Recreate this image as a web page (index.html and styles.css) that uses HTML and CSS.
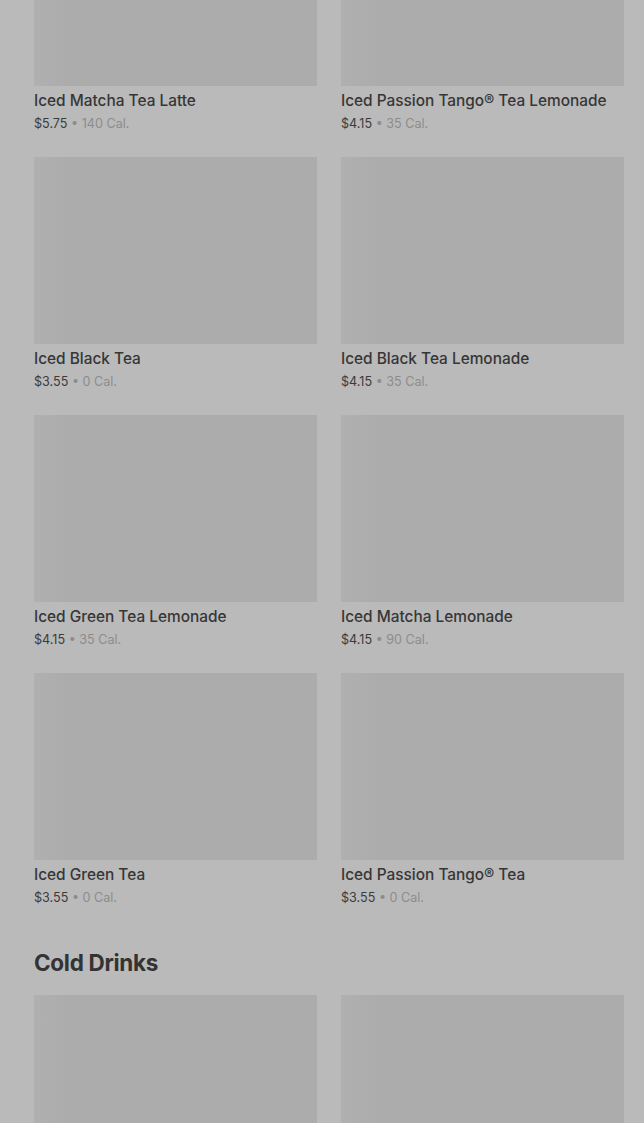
FILE: index.html
```html
<!DOCTYPE html>
<html>

<head>
    <title>Menu</title>
    <link rel="stylesheet" href="styles.css">
</head>

<body>
    <div class="menu">
        <div class="grid first">
            <div class="card">
                <div class="thumb"></div>
                <div class="name">Iced Matcha Tea Latte</div>
                <div class="meta"><span class="price">$5.75</span> &bull; <span class="cal">140 Cal.</span></div>
            </div>
            <div class="card">
                <div class="thumb"></div>
                <div class="name">Iced Passion Tango&reg; Tea Lemonade</div>
                <div class="meta"><span class="price">$4.15</span> &bull; <span class="cal">35 Cal.</span></div>
            </div>
            <div class="card">
                <div class="thumb"></div>
                <div class="name">Iced Black Tea</div>
                <div class="meta"><span class="price">$3.55</span> &bull; <span class="cal">0 Cal.</span></div>
            </div>
            <div class="card">
                <div class="thumb"></div>
                <div class="name">Iced Black Tea Lemonade</div>
                <div class="meta"><span class="price">$4.15</span> &bull; <span class="cal">35 Cal.</span></div>
            </div>
            <div class="card">
                <div class="thumb"></div>
                <div class="name">Iced Green Tea Lemonade</div>
                <div class="meta"><span class="price">$4.15</span> &bull; <span class="cal">35 Cal.</span></div>
            </div>
            <div class="card">
                <div class="thumb"></div>
                <div class="name">Iced Matcha Lemonade</div>
                <div class="meta"><span class="price">$4.15</span> &bull; <span class="cal">90 Cal.</span></div>
            </div>
            <div class="card">
                <div class="thumb"></div>
                <div class="name">Iced Green Tea</div>
                <div class="meta"><span class="price">$3.55</span> &bull; <span class="cal">0 Cal.</span></div>
            </div>
            <div class="card">
                <div class="thumb"></div>
                <div class="name">Iced Passion Tango&reg; Tea</div>
                <div class="meta"><span class="price">$3.55</span> &bull; <span class="cal">0 Cal.</span></div>
            </div>
        </div>

        <h2 class="section-title">Cold Drinks</h2>
        <div class="grid">
            <div class="card">
                <div class="thumb"></div>
            </div>
            <div class="card">
                <div class="thumb"></div>
            </div>
        </div>
    </div>
</body>

</html>
```

FILE: styles.css
```css
body {
    margin: 0;
    padding: 0;
    background-color: #bababa;
    color: #363636;
    font-family: Inter, "Open Sans", sans-serif;
    overflow: hidden;
}

.menu {
    padding: 0 20px 0 34px;
}

.grid {
    display: grid;
    grid-template-columns: 283px 283px;
    column-gap: 24px;
    row-gap: 24px;
}

.grid.first {
    margin-top: -101px;
}

.thumb {
    height: 187px;
    background: linear-gradient(90deg, #b0b0b0 0%, #acacac 12%, #acacac 100%);
}

.name {
    margin-top: 5px;
    font-size: 15.4px;
    line-height: 20px;
    font-weight: 500;
    color: #363636;
    white-space: nowrap;
}

.meta {
    margin-top: 4px;
    font-size: 12.6px;
    line-height: 18px;
    color: #8c8c8c;
}

.price {
    color: #3b3b3b;
}

.section-title {
    margin: 41px 0 17px;
    font-size: 22.5px;
    line-height: 30px;
    font-weight: 700;
    letter-spacing: -0.3px;
    color: #333333;
}
```
